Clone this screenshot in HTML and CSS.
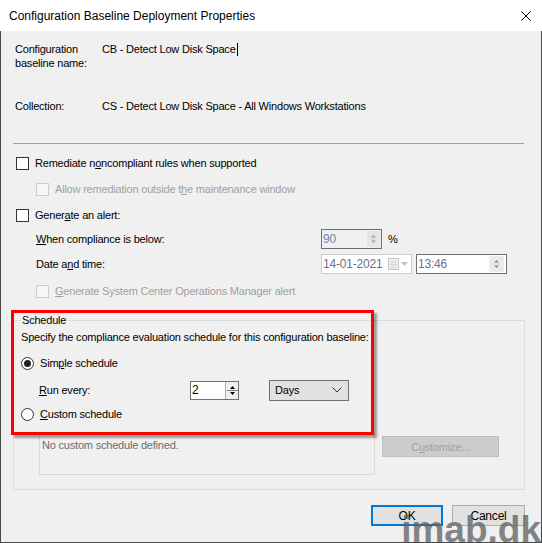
FILE: index.html
```html
<!DOCTYPE html>
<html>
<head>
<meta charset="utf-8">
<link rel="stylesheet" href="styles.css">
</head>
<body>
<div class="window">
  <div class="titlebar">
    <span class="title">Configuration Baseline Deployment Properties</span>
    <svg class="close" viewBox="0 0 10 10" width="10" height="10"><path d="M0.5 0.5L9.5 9.5M9.5 0.5L0.5 9.5" stroke="#000" stroke-width="1" fill="none"/></svg>
  </div>
  <div class="client">
    <div class="info-row name-row">
      <div class="lbl">Configuration<br>baseline name:</div>
      <div class="val">CB - Detect Low Disk Space<span class="caret"></span></div>
    </div>
    <div class="info-row coll-row">
      <div class="lbl">Collection:</div>
      <div class="val">CS - Detect Low Disk Space - All Windows Workstations</div>
    </div>
    <div class="sep"></div>

    <div class="opts">
      <div class="opt r1"><span class="chk"></span><span>Remediate n<u>o</u>ncompliant rules when supported</span></div>
      <div class="opt r2 sub dis"><span class="chk"></span><span>Allow remediation outside t<u>h</u>e maintenance window</span></div>
      <div class="opt r3"><span class="chk"></span><span>Gener<u>a</u>te an alert:</span></div>
      <div class="opt r4 sub">
        <span class="flbl"><u>W</u>hen compliance is below:</span>
        <span class="spin pct"><span class="sv">90</span><span class="sbtn"><svg width="9" height="12" viewBox="0 0 9 12"><path d="M2 4.5h5L4.5 2z" fill="#a0a0a0"/><path d="M2 7.5h5L4.5 10z" fill="#a0a0a0"/><path d="M0 6h9" stroke="#d8d8d8"/></svg></span></span>
        <span class="pctsign">%</span>
      </div>
      <div class="opt r5 sub">
        <span class="flbl">Date a<u>n</u>d time:</span>
        <span class="datebox"><span class="sv">14-01-2021</span><svg class="cal" width="22" height="14" viewBox="0 0 22 14"><rect x="1.5" y="1.5" width="10" height="11" fill="#f4f4f4" stroke="#c4c4c4"/><path d="M3 5h7M3 7.5h7M3 10h7M5 3v9M8 3v9" stroke="#d6d6d6"/><path d="M14 5h7l-3.5 4z" fill="#c4c4c4"/></svg></span>
        <span class="timebox"><span class="sv">13:46</span><span class="sbtn"><svg width="9" height="12" viewBox="0 0 9 12"><path d="M2 4.5h5L4.5 2z" fill="#8a8a8a"/><path d="M2 7.5h5L4.5 10z" fill="#8a8a8a"/><path d="M0 6h9" stroke="#d8d8d8"/></svg></span></span>
      </div>
      <div class="opt r6 sub dis"><span class="chk"></span><span><u>G</u>enerate System Center Operations Manager alert</span></div>
    </div>

    <fieldset class="group">
      <legend>Schedule</legend>
      <div class="spec">Specify the compliance evaluation schedule for this configuration baseline:</div>
      <div class="radio-row rr1"><span class="radio on"></span><span>Sim<u>p</u>le schedule</span></div>
      <div class="run-row">
        <span class="runlbl"><u>R</u>un every:</span>
        <span class="spin2"><span class="sv">2</span><span class="sbtn2"><svg width="11" height="17" viewBox="0 0 11 17"><path d="M3 7h5L5.5 4z" fill="#000"/><path d="M3 10h5L5.5 13z" fill="#000"/><path d="M0 8.5h11" stroke="#7a7a7a"/></svg></span></span>
        <span class="combo"><span>Days</span><svg width="10" height="6" viewBox="0 0 10 6"><path d="M0.5 0.5L5 5L9.5 0.5" stroke="#333" fill="none"/></svg></span>
      </div>
      <div class="radio-row rr2"><span class="radio"></span><span><u>C</u>ustom schedule</span></div>
      <div class="custom-row">
        <div class="custombox">No custom schedule defined.</div>
        <div class="custbtn">C<u>u</u>stomize...</div>
      </div>
    </fieldset>

    <div class="buttons">
      <div class="btn ok">OK</div>
      <div class="btn">Cancel</div>
    </div>
  </div>
  <div class="annot"></div>
  <div class="watermark">imab.dk</div>
</div>
</body>
</html>
```
FILE: styles.css
```css
html, body {
  margin: 0;
  padding: 0;
  width: 542px;
  height: 543px;
  overflow: hidden;
  background: #fff;
}
body {
  font-family: "Liberation Sans", Arial, sans-serif;
  font-size: 11px;
  color: #000;
}
u { text-underline-offset: 1px; }
.window {
  position: relative;
  width: 542px;
  height: 543px;
  display: flex;
  flex-direction: column;
}
.titlebar {
  height: 31px;
  flex: none;
  display: flex;
  align-items: center;
  justify-content: space-between;
  padding-left: 9px;
  background: #fff;
  font-size: 12px;
}
.close { margin-right: 11px; }
.client {
  flex: 1;
  background: #f0f0f0;
  border: 1px solid #4a4a4a;
  border-top: none;
  display: flex;
  flex-direction: column;
  letter-spacing: -0.2px;
}
.info-row {
  display: flex;
  line-height: 14px;
  padding-left: 14px;
}
.info-row .lbl { width: 87px; flex: none; }
.name-row { margin-top: 11px; height: 28px; }
.coll-row { margin-top: 29px; }
.caret {
  display: inline-block;
  width: 1px;
  height: 13px;
  background: #000;
  vertical-align: -3px;
  margin-left: 1px;
}
.sep {
  margin: 30px 0 0 12px;
  width: 511px;
  border-top: 1px solid #a0a0a0;
}
.opts {
  margin-top: 6px;
  display: flex;
  flex-direction: column;
}
.opt {
  display: flex;
  align-items: center;
  padding-left: 15px;
}
.opt.sub { padding-left: 35px; }
.r1 { height: 26px; }
.r2 { height: 26px; }
.r3 { height: 26px; }
.r4 { height: 21px; }
.r5 { height: 30px; }
.r6 { height: 24px; }
.chk {
  width: 13px;
  height: 13px;
  box-sizing: border-box;
  border: 1px solid #333;
  background: #fff;
  margin-right: 6px;
  flex: none;
}
.dis { color: #a0a0a0; }
.dis .chk { border-color: #cccccc; background: #f7f7f7; }
.flbl { width: 285px; flex: none; }
.spin {
  display: flex;
  width: 61px;
  height: 20px;
  box-sizing: border-box;
  border: 1px solid #6e6e6e;
  background: #f0f0f0;
  color: #6d86ad;
}
.sv { flex: 1; padding-left: 1px; line-height: 18px; font-size: 12px; }
.sbtn {
  width: 13px;
  margin: 1px 1px 1px 0;
  background: #e6e6e6;
  display: flex;
  align-items: center;
  justify-content: center;
}
.pctsign { margin-left: 6px; }
.datebox {
  display: flex;
  align-items: center;
  width: 91px;
  height: 20px;
  box-sizing: border-box;
  border: 1px solid #cccccc;
  background: #fff;
  color: #6d6d8a;
}
.datebox .cal { margin-right: 2px; }
.timebox {
  display: flex;
  width: 91px;
  height: 20px;
  box-sizing: border-box;
  border: 1px solid #707070;
  background: #fff;
  margin-left: 4px;
  color: #6d6d8a;
}
.timebox .sbtn { width: 15px; margin-right: 2px; background: #ececec; }
.group {
  margin: 10px 0 0 12px;
  width: 512px;
  box-sizing: border-box;
  border: 1px solid #dcdcdc;
  padding: 0 0 14px 7px;
  min-inline-size: 0;
}
.group legend {
  padding: 0 2px 0 1px;
  line-height: 14px;
}
.spec { line-height: 14px; margin-top: 3px; }
.radio-row {
  display: flex;
  align-items: center;
}
.rr1 { height: 26px; margin-top: 6px; }
.rr2 { height: 20px; }
.radio {
  width: 13px;
  height: 13px;
  box-sizing: border-box;
  border: 1px solid #333;
  border-radius: 50%;
  background: #fff;
  margin-right: 6px;
  position: relative;
  flex: none;
}
.radio.on::after {
  content: "";
  position: absolute;
  left: 2px;
  top: 2px;
  width: 7px;
  height: 7px;
  border-radius: 50%;
  background: #222;
}
.run-row {
  height: 28px;
  display: flex;
  align-items: center;
  padding-left: 18px;
}
.runlbl { width: 151px; flex: none; }
.spin2 {
  display: flex;
  width: 49px;
  height: 19px;
  box-sizing: border-box;
  border: 1px solid #707070;
  background: #fff;
}
.spin2 .sv { line-height: 17px; }
.sbtn2 {
  width: 12px;
  border-left: 1px solid #aaaaaa;
  background: #f0f0f0;
  display: flex;
  align-items: center;
  justify-content: center;
}
.combo {
  margin-left: 30px;
  width: 80px;
  height: 21px;
  box-sizing: border-box;
  border: 1px solid #707070;
  background: #e1e1e1;
  display: flex;
  align-items: center;
  justify-content: space-between;
  padding: 0 6px 0 5px;
  font-size: 11px;
}
.custom-row {
  display: flex;
  margin-top: 8px;
  padding-left: 18px;
}
.custombox {
  width: 336px;
  height: 43px;
  box-sizing: border-box;
  border: 1px solid #d9d9d9;
  padding: 6px 0 0 2px;
  color: #6d6d6d;
}
.custbtn {
  margin: 4px 0 0 7px;
  width: 117px;
  height: 21px;
  box-sizing: border-box;
  border: 1px solid #bfbfbf;
  background: #cccccc;
  color: #a0a0a0;
  display: flex;
  align-items: center;
  justify-content: center;
}
.buttons {
  display: flex;
  justify-content: flex-end;
  gap: 9px;
  padding-right: 16px;
  margin-top: 15px;
}
.btn {
  width: 73px;
  height: 21px;
  box-sizing: border-box;
  border: 1px solid #adadad;
  background: #e1e1e1;
  display: flex;
  align-items: center;
  justify-content: center;
  font-size: 12px;
}
.btn.ok { width: 72px; border: 2px solid #0078d7; }
.annot {
  position: absolute;
  left: 11px;
  top: 310px;
  width: 363px;
  height: 125px;
  box-sizing: border-box;
  border: 3px solid #ff0000;
  box-shadow: 3px 3px 2px rgba(0, 0, 0, 0.35);
}
.watermark {
  position: absolute;
  right: 1px;
  bottom: -7px;
  font-family: "Liberation Sans", Arial, sans-serif;
  font-weight: bold;
  font-size: 37px;
  letter-spacing: 0;
  line-height: 40px;
  color: rgba(95, 95, 95, 0.75);
}
```
